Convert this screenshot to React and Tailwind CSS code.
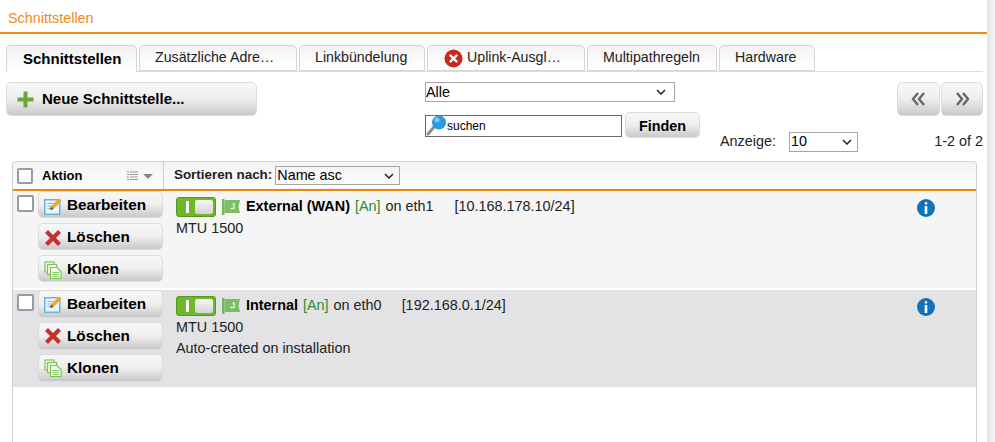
import React from 'react';

const btn = 'flex items-center rounded-[5px] border border-[#dcdcdc] bg-gradient-to-b from-[#f8f8f8] via-[#eeeeee] to-[#c9c9c9] font-bold text-black';

const Plus = () => (
  <svg width="17" height="17" viewBox="0 0 17 17"><path d="M6.5 0.5h4v6h6v4h-6v6h-4v-6h-6v-4h6z" fill="#6aa63c" /></svg>
);

const ErrorIcon = () => (
  <svg width="19" height="19" viewBox="0 0 19 19" className="shrink-0">
    <circle cx="9.5" cy="9.5" r="9" fill="#c8281e" />
    <path d="M6.5 6.5l6 6M12.5 6.5l-6 6" stroke="#fff" strokeWidth="2.4" strokeLinecap="round" />
  </svg>
);

const EditIcon = () => (
  <svg width="18" height="18" viewBox="0 0 18 18" className="shrink-0">
    <rect x="0.75" y="2.75" width="15" height="14.5" fill="#eaf5fb" stroke="#67b5df" strokeWidth="1.5" />
    <path d="M3.5 6.5h6M3.5 9h4M3.5 11.5h3" stroke="#8fb8d0" strokeWidth="1" />
    <path d="M6 13l1-3.5L14.5 1.5l3 2.5-8 8z" fill="#f5a623" />
    <path d="M6 13l1-3.5 2.5 2.5z" fill="#555" />
  </svg>
);

const DeleteIcon = () => (
  <svg width="18" height="18" viewBox="0 0 18 18" className="shrink-0">
    <path d="M2.5 2.5l13 13M15.5 2.5l-13 13" stroke="#c4302b" strokeWidth="4.2" />
  </svg>
);

const CloneIcon = () => (
  <svg width="18" height="18" viewBox="0 0 18 18" className="shrink-0" fill="#f3fbe9" stroke="#7cc35a" strokeWidth="1.2">
    <rect x="1" y="1" width="9" height="10" />
    <rect x="3.5" y="3.5" width="9" height="10" />
    <path d="M6.5 6.5h6.5l4 4v7H6.5z" />
    <path d="M8.5 11.5h6.5M8.5 13.5h6.5M8.5 15.5h6.5" strokeWidth="0.9" />
  </svg>
);

const Flag = () => (
  <svg width="18" height="16" viewBox="0 0 18 16" className="shrink-0">
    <rect x="0" y="0" width="2.5" height="16" fill="#74b75c" />
    <path d="M2.5 1h15.5l-1.5 6.5L18 14H2.5z" fill="#7dbd66" />
    <path d="M8 9.5h4V5h-1.5" stroke="#dff0d6" strokeWidth="1.5" fill="none" />
  </svg>
);

const Info = () => (
  <svg width="18" height="18" viewBox="0 0 18 18">
    <circle cx="9" cy="9" r="9" fill="#0f72ba" />
    <rect x="7.7" y="3" width="2.6" height="2.6" rx="1.2" fill="#fff" />
    <rect x="7.7" y="7" width="2.6" height="8" fill="#fff" />
  </svg>
);

const Search = () => (
  <svg width="21" height="22" viewBox="0 0 21 22" className="shrink-0">
    <path d="M8 12L2 19" stroke="#8c8c8c" strokeWidth="3" strokeLinecap="round" />
    <circle cx="13" cy="7.5" r="7" fill="#2d9bdc" />
    <circle cx="11" cy="5" r="2.5" fill="#7cc9f2" />
  </svg>
);

const Chevron = () => (
  <svg width="10" height="6" viewBox="0 0 10 6" className="shrink-0"><path d="M1 1l4 4 4-4" fill="none" stroke="#222" strokeWidth="1.5" /></svg>
);

const Prev = () => (
  <svg width="15" height="14" viewBox="0 0 15 14"><path d="M7 1L2 7l5 6M13 1L8 7l5 6" fill="none" stroke="#666" strokeWidth="2.4" /></svg>
);

const Next = () => (
  <svg width="15" height="14" viewBox="0 0 15 14"><path d="M2 1l5 6-5 6M8 1l5 6-5 6" fill="none" stroke="#666" strokeWidth="2.4" /></svg>
);

const Tab = ({ active, icon, w, children }) => (
  <div
    className={`flex items-center gap-[4px] rounded-t-[5px] border border-[#d4d4d4] bg-gradient-to-b ${
      active ? '-mb-px h-[27px] border-b-0 from-[#f0f0f0] to-white pl-[16px] text-[15px] font-bold text-black' : 'h-[26px] from-[#f3f3f3] to-white pl-[15px] text-[14.2px]'
    } ${w}`}
  >
    {icon}
    {children}
  </div>
);

const ActionButton = ({ icon, children, h }) => (
  <div className={`${btn} ${h} gap-[5px] pl-[5px] text-[15.3px]`}>
    {icon}
    {children}
  </div>
);

const Toggle = () => (
  <div className="flex h-[20px] w-[40px] items-center rounded-[3px] border border-[#559a1e] bg-[#6cb82a] p-[2px]">
    <div className="flex w-[16px] justify-center"><div className="h-[12px] w-[3px] bg-white" /></div>
    <div className="h-[14px] flex-1 rounded-[2px] bg-gradient-to-b from-[#f6f6f6] to-[#d4d4d4]" />
  </div>
);

const Row = ({ bg, name, nameGap, port, ip, lines, gapClass, btnH }) => (
  <div className={`flex h-[97px] ${bg}`}>
    <div className="w-[25px] pl-[4px] pt-[4px]">
      <div className="h-[17px] w-[17px] rounded-[2px] border-2 border-[#9a9aa5] bg-white" />
    </div>
    <div className={`flex w-[125px] flex-col ${gapClass}`}>
      <ActionButton h={btnH} icon={<EditIcon />}>Bearbeiten</ActionButton>
      <ActionButton h={btnH} icon={<DeleteIcon />}>Löschen</ActionButton>
      <ActionButton h={btnH} icon={<CloneIcon />}>Klonen</ActionButton>
    </div>
    <div className="flex-1 pl-[13px] pt-[5px]">
      <div className="flex h-[21px] items-center">
        <Toggle />
        <div className="ml-[6px] mr-[6px]"><Flag /></div>
        <span className="font-bold text-black">{name}</span>
        <span className="ml-[5px] text-[#2e8b2e]">[An]</span>
        <span className="ml-[5px]">on {port}</span>
        <span className={nameGap}>{ip}</span>
      </div>
      {lines.map((l) => (
        <div key={l} className="mt-[1px] h-[20px] leading-[20px]">{l}</div>
      ))}
    </div>
    <div className="w-[59px] pt-[8px]"><Info /></div>
  </div>
);

export default function App() {
  return (
    <div className="flex h-[442px] w-[995px] overflow-hidden bg-white font-['Liberation_Sans',Arial,sans-serif] text-[14.4px] text-[#222]">
      <div className="w-[987px]">
        <div className="h-[34px] border-b-2 border-[#f28a1a] pl-[8px] pt-[9px] leading-[18px] text-[#f28a1a]">Schnittstellen</div>

        <div className="ml-[6px] mt-[11px] mr-[4px] flex gap-[2px] border-b border-[#dcdcdc]">
          <Tab active w="w-[131px]">Schnittstellen</Tab>
          <Tab w="w-[158px]">Zusätzliche Adre…</Tab>
          <Tab w="w-[126px]">Linkbündelung</Tab>
          <Tab w="w-[158px] pl-[16px]" icon={<ErrorIcon />}>Uplink-Ausgl…</Tab>
          <Tab w="w-[130px]">Multipathregeln</Tab>
          <Tab w="w-[96px]">Hardware</Tab>
        </div>

        <div className="flex h-[89px] pt-[10px]">
          <div className={`${btn} ml-[6px] h-[34px] w-[251px] gap-[8px] pl-[10px] text-[15px]`}><Plus />Neue Schnittstelle...</div>

          <div className="ml-[168px] w-[275px]">
            <div className="flex h-[20px] w-[250px] items-center justify-between border border-[#a6a6a6] pr-[8px] leading-none text-black">
              Alle<Chevron />
            </div>
            <div className="mt-[10px] flex items-start">
              <div className="mt-[3px] flex h-[22px] w-[197px] items-center border border-[#666] text-[12px] text-black"><Search />suchen</div>
              <div className={`${btn} ml-[3px] h-[26px] w-[75px] justify-center pt-[3px]`}>Finden</div>
            </div>
          </div>

          <div className="relative flex-1">
            <div className="absolute left-[20px] top-[49px] flex items-center">
              <span>Anzeige:</span>
              <div className="ml-[13px] flex h-[20px] w-[69px] items-center justify-between border border-[#a6a6a6] pl-px pr-[5px] text-black">10<Chevron /></div>
            </div>
            <div className="absolute right-[4px] top-[49px] leading-[20px]">1-2 of 2</div>
            <div className="absolute right-[4px] top-0 flex gap-px">
              <div className={`${btn} h-[34px] w-[43px] justify-center`}><Prev /></div>
              <div className={`${btn} h-[34px] w-[42px] justify-center`}><Next /></div>
            </div>
          </div>
        </div>

        <div className="ml-[12px] h-[300px] w-[965px] rounded-t-[4px] border-x border-[#cfcfcf]">
          <div className="flex h-[30px] rounded-t-[4px] border-y border-t-[#d4d4d4] border-b-[#e8860f] border-b-2 bg-gradient-to-b from-[#f2f2f2] to-white font-bold">
            <div className="flex w-[151px] items-center border-r border-[#cfcfcf] pl-[4px] text-[13px]">
              <div className="h-[16px] w-[16px] rounded-[2px] border-2 border-[#9a9aa5] bg-white" />
              <span className="ml-[9px] text-black">Aktion</span>
              <svg width="27" height="10" viewBox="0 0 27 10" className="ml-[45px]">
                <path d="M0 1h2M3 1h8M0 3.5h2M3 3.5h8M0 6h2M3 6h8M0 8.5h2M3 8.5h8" stroke="#999" strokeWidth="1" />
                <path d="M16 3h10l-5 5z" fill="#888" />
              </svg>
            </div>
            <div className="flex items-center pl-[10px] text-[13.4px]">
              <span>Sortieren nach:</span>
              <div className="ml-[3px] flex h-[19px] w-[125px] items-center justify-between border border-[#a6a6a6] pr-[5px] pl-px text-[14.4px] font-normal text-black">Name asc<Chevron /></div>
            </div>
          </div>

          <Row bg="bg-[#f5f5f5]" name="External (WAN)" port="eth1" ip="[10.168.178.10/24]" nameGap="ml-[21px]" lines={['MTU 1500']} gapClass="gap-[5px]" btnH="h-[27px] pt-[2px]" />
          <div className="h-[2px] bg-white" />
          <Row bg="bg-[#e3e3e5]" name="Internal" port="eth0" ip="[192.168.0.1/24]" nameGap="ml-[20px]" lines={['MTU 1500', 'Auto-created on installation']} gapClass="gap-[4px]" btnH="h-[28px]" />
        </div>
      </div>
      <div className="w-[8px] bg-gradient-to-r from-[#e2e2e2] to-[#f6f6f6]" />
    </div>
  );
}
